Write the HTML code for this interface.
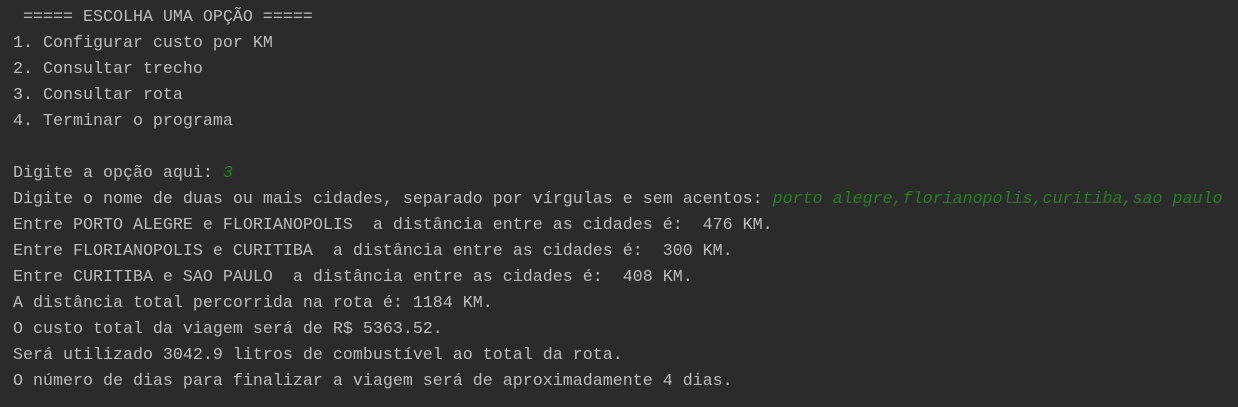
<!DOCTYPE html>
<html><head><meta charset="utf-8"><style>
html,body{margin:0;padding:0;background:#2b2b2b;width:1238px;height:407px;overflow:hidden}
pre{margin:0;padding:5px 0 0 13px;font-family:"Liberation Mono","DejaVu Sans Mono",monospace;font-size:16.66px;line-height:26px;color:#bbbbbb;white-space:pre}
.g{color:#23801f;font-style:italic}
</style></head><body><pre> ===== ESCOLHA UMA OPÇÃO =====
1. Configurar custo por KM
2. Consultar trecho
3. Consultar rota
4. Terminar o programa

Digite a opção aqui: <span class="g">3</span>
Digite o nome de duas ou mais cidades, separado por vírgulas e sem acentos: <span class="g">porto alegre,florianopolis,curitiba,sao paulo</span>
Entre PORTO ALEGRE e FLORIANOPOLIS  a distância entre as cidades é:  476 KM.
Entre FLORIANOPOLIS e CURITIBA  a distância entre as cidades é:  300 KM.
Entre CURITIBA e SAO PAULO  a distância entre as cidades é:  408 KM.
A distância total percorrida na rota é: 1184 KM.
O custo total da viagem será de R$ 5363.52.
Será utilizado 3042.9 litros de combustível ao total da rota.
O número de dias para finalizar a viagem será de aproximadamente 4 dias.</pre></body></html>
